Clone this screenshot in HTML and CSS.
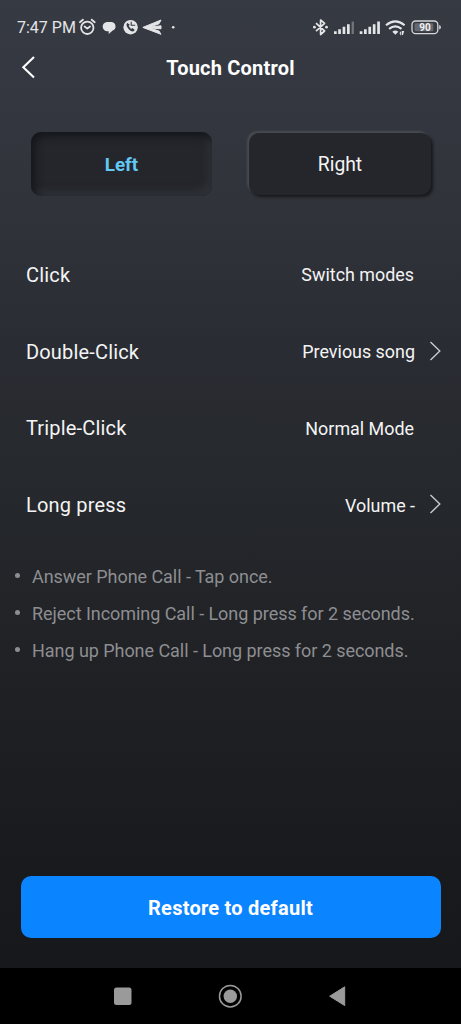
FILE: index.html
```html
<!DOCTYPE html>
<html lang="en">
<head>
<meta charset="utf-8">
<title>Touch Control</title>
<link rel="stylesheet" href="styles.css">
</head>
<body>
<div class="screen">
  <div class="status">
    <span class="time">7:47 PM</span>
    <svg class="status-left" width="100" height="20" viewBox="78 17 100 20">
      <g fill="none" stroke="#e4e5e7" stroke-width="1.8" stroke-linecap="round" stroke-linejoin="round">
        <circle cx="87.300" cy="27.800" r="6.200"/>
        <path d="M84.600 26.500l2.700 2.100 2.700-2.100M79.900 22.200l3-2.500M94.700 22.200l-3-2.500"/>
      </g>
      <g fill="#e4e5e7">
        <path d="M107 22h4a4.400 4.400 0 0 1 1.700 8.500l-4 3.500v-2.800H107.500a4.600 4.600 0 0 1-.5-9.200z"/>
        <circle cx="130.600" cy="27.200" r="7.200"/>
        <path d="M142.800 27.400L161 20l-2 3.800L150 27l11-1.200v3L150 28l9 3 2 3.300z" stroke="#e4e5e7" stroke-width="1"/>
        <circle cx="173.200" cy="27.300" r="1.300"/>
      </g>
      <path d="M127.300 22.900q-1.700 1.400.2 4.700 2.500 3.800 5.600 4l1.700-1.700-2.400-1.900-1.400 1-2.300-3 1-1.400z" fill="#363a42"/>
      <path d="M131.200 21.800v3.500h4" fill="none" stroke="#363a42" stroke-width="1.100"/>
    </svg>
    <svg class="status-right" width="132" height="20" viewBox="312 17 132 20">
      <path d="M316 23.200l8.600 7.800-4 3.500V20l4 3.300-8.600 7.800" fill="none" stroke="#e4e5e7" stroke-width="1.700" stroke-linejoin="round"/>
      <g fill="#e4e5e7">
        <circle cx="314.400" cy="27.200" r="1.400"/><circle cx="326.500" cy="27.200" r="1.400"/>
        <path d="M334 31.200h2.700V34H334zM338.200 29.200h2.700V34h-2.700zM342.600 26.800h2.700V34h-2.700zM347 24.200h2.700V34H347z"/>
        <path d="M351.600 21.600h2.300V34h-2.300z" opacity=".35"/>
        <path d="M359.700 31.200h2.700V34h-2.700zM364 29.200h2.700V34H364zM368.400 26.800h2.700V34h-2.700zM372.800 24.200h2.700V34h-2.700zM377.200 21.600h2.700V34h-2.700z"/>
        <path d="M392.300 31.700q3-2.400 6 0l-3 3z"/>
        <path d="M399.300 33.500l2-2.800v4.500h-1v-1.700zM402 31h2.200l-1.200 4h-1z"/>
      </g>
      <g fill="none" stroke="#e4e5e7" stroke-width="2.100">
        <path d="M386 25.200q9.300-7.700 18.600 0M389.100 28.900q6.200-5.200 12.400 0"/>
      </g>
      <rect x="412" y="21" width="25.800" height="12.600" rx="3.600" fill="none" stroke="#d5d6d8" stroke-width="1.300"/>
      <rect x="414.500" y="23.300" width="18.800" height="8" rx="1.200" fill="#65686e"/>
      <path d="M439.200 25q1.700.3 1.700 2.300t-1.700 2.300z" fill="#d5d6d8"/>
      <text x="425" y="30.700" class="battery" text-anchor="middle">90</text>
    </svg>
  </div>
  <header class="header">
    <svg class="back" width="20" height="28" viewBox="18 54 20 28"><path d="M34 57L23.300 67.300 34 77.600" fill="none" stroke="#fff" stroke-width="2.100"/></svg>
    <h1 class="title">Touch Control</h1>
  </header>
  <div class="tabs">
    <div class="tab tab-active">Left</div>
    <div class="tab tab-raised">Right</div>
  </div>
  <div class="rows">
    <div class="row"><span class="label">Click</span><span class="value">Switch modes</span></div>
    <div class="row"><span class="label">Double-Click</span><span class="value">Previous song</span><svg class="chev" width="14" height="22" viewBox="0 0 14 22"><path d="M1.500 1l9.300 9-9.300 9"/></svg></div>
    <div class="row"><span class="label">Triple-Click</span><span class="value">Normal Mode</span></div>
    <div class="row"><span class="label">Long press</span><span class="value">Volume -</span><svg class="chev" width="14" height="22" viewBox="0 0 14 22"><path d="M1.500 1l9.300 9-9.300 9"/></svg></div>
  </div>
  <ul class="notes">
    <li class="note">Answer Phone Call - Tap once.</li>
    <li class="note">Reject Incoming Call - Long press for 2 seconds.</li>
    <li class="note">Hang up Phone Call - Long press for 2 seconds.</li>
  </ul>
  <div class="restore">Restore to default</div>
  <div class="nav">
    <svg width="461" height="56" viewBox="0 968 461 56">
      <rect x="114" y="987.500" width="17.500" height="17.500" rx="2.500" fill="#9a9a9a"/>
      <circle cx="230.300" cy="996.200" r="10.800" fill="none" stroke="#9a9a9a" stroke-width="1.500"/>
      <circle cx="230.300" cy="996.200" r="6.700" fill="#9a9a9a"/>
      <path d="M344.700 986.800v18.800l-15-9.400z" fill="#9a9a9a" stroke="#9a9a9a" stroke-width="1" stroke-linejoin="round"/>
    </svg>
  </div>
</div>
</body>
</html>
```
FILE: styles.css
```css
* { box-sizing: border-box; }
body { margin: 0; background: #000; font-family: Roboto, "Liberation Sans", sans-serif; color: #f4f4f5; }
.screen { width: 461px; height: 1024px; display: flex; flex-direction: column; overflow: hidden;
  background: linear-gradient(#363a43 0, #33363e 130px, #2f3238 230px, #2a2c33 350px, #26292d 470px, #222428 600px, #1e1f23 730px, #191a1e 870px, #16181b 968px); }
.status { height: 44px; padding: 10px 17px 0; display: flex; align-items: center; color: #e4e5e7; }
.time { width: 61px; padding-top: 2px; font-size: 16px; line-height: 20px; white-space: nowrap; }
.status-right { margin-left: auto; }
.battery { font-size: 10px; font-weight: 700; fill: #f2f2f3; }
.header { height: 48px; padding: 0 18px; display: grid; grid-template-columns: 20px 1fr 20px; align-items: center; }
.title { margin: 0; text-align: center; font-size: 20px; letter-spacing: .2px; font-weight: 700; color: #fff; line-height: 28px; }
.tabs { display: flex; justify-content: space-between; padding: 40px 30px 0 31px; height: 143px; }
.tab { display: flex; align-items: center; justify-content: center; font-size: 19.300px; border-radius: 10px; background: #24262b; }
.tab-active { width: 181px; height: 64px; padding-top: 1px; color: #62c8f5; font-weight: 700; font-size: 18.800px;
  box-shadow: inset 4px 4px 8px #14161a, inset -4px -5px 7px #30333a; }
.tab-raised { width: 182px; height: 62px; margin-top: 1px; box-shadow: -2px -2px 2px #484b51, 2px 2px 3px #17181c; }
.rows { display: flex; flex-direction: column; padding: 1.500px 18px 0 26px; }
.row { height: 76.800px; display: flex; align-items: center; }
.label { flex: 1; font-size: 20px; letter-spacing: .17px; }
.value { font-size: 17.900px; margin-right: 29px; }
.chev { margin-left: -15px; fill: none; stroke: #c9cacc; stroke-width: 1.400; }
.notes { list-style: none; margin: 14.300px 0 0; padding: 0 0 0 15px; color: #8d8e91; }
.note { display: flex; align-items: center; height: 37px; gap: 12px; font-size: 18px; letter-spacing: -.05px; white-space: nowrap; }
.note::before { content: ""; width: 5px; height: 5px; margin-bottom: 2px; border-radius: 50%; background: #8d8e91; }
.restore { margin: auto 20.500px 30px; height: 62px; padding-top: 2px; flex: none; border-radius: 10px; background: #0b84ff; color: #fff;
  display: flex; align-items: center; justify-content: center; font-size: 20px; letter-spacing: .24px; font-weight: 700; }
.nav { height: 56px; flex: none; background: #000; }
.nav svg { display: block; }
```
